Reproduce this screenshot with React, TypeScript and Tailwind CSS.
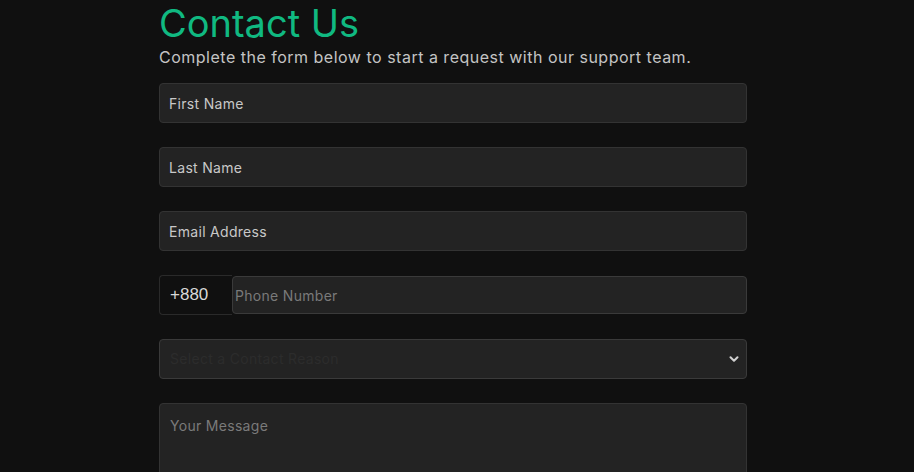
import { ChevronDown } from 'lucide-react'

const field =
  'h-10 w-full rounded border border-[#333333] bg-[#232323] pl-[9px] pr-2.5 text-sm tracking-[0.3px] text-[#d0d0d0] outline-none'

const ContactForm = () => {
  return (
    <div className="min-h-screen bg-[#101010] font-['Inter',sans-serif]">
      <div className="ml-[159px] w-[588px]">
        <h1 className="pt-[2px] text-[38px] leading-[42px] text-[#10b981]">Contact Us</h1>
        <p className="mt-[1px] text-base leading-6 tracking-[0.5px] text-[#c4c4c4]">
          Complete the form below to start a request with our support team.
        </p>

        <form className="mt-[14px] flex flex-col gap-6">
          <input className={field + ' placeholder:text-[#c8c8c8]'} placeholder="First Name" />
          <input className={field + ' placeholder:text-[#c8c8c8]'} placeholder="Last Name" />
          <input className={field + ' placeholder:text-[#c8c8c8]'} placeholder="Email Address" />

          <div className="flex h-10">
            <div className="flex w-[73px] items-center rounded-l border border-r-0 border-[#2a2a2a] bg-[#101010] pl-2.5 font-['Liberation_Sans',sans-serif] text-[17px] text-[#d8d8d8]">
              +880
            </div>
            <input
              className="mt-px h-[38px] flex-1 rounded border border-[#3a3a3a] bg-[#232323] px-0.5 text-sm tracking-[0.3px] text-[#d0d0d0] outline-none placeholder:text-[#7a7a7a]"
              placeholder="Phone Number"
            />
          </div>

          <div className="relative">
            <select
              defaultValue=""
              className="h-10 w-full appearance-none rounded border border-[#3a3a3a] bg-[#232323] px-2.5 text-sm tracking-[0.3px] text-[#2c2c2c] outline-none">
              <option value="" disabled>
                Select a Contact Reason
              </option>
              <option>General Inquiry</option>
              <option>Technical Support</option>
              <option>Billing</option>
            </select>
            <ChevronDown
              className="pointer-events-none absolute right-[6px] top-[13px] h-[14px] w-[14px] text-[#d0d0d0]"
              strokeWidth={3.5}
            />
          </div>

          <textarea
            className="h-[120px] w-full resize-none rounded border border-[#333333] bg-[#232323] px-2.5 py-3 text-sm tracking-[0.3px] text-[#d0d0d0] outline-none placeholder:text-[#7a7a7a]"
            placeholder="Your Message"
          />
        </form>
      </div>
    </div>
  )
}

export default function App() {
  return <ContactForm />
}
